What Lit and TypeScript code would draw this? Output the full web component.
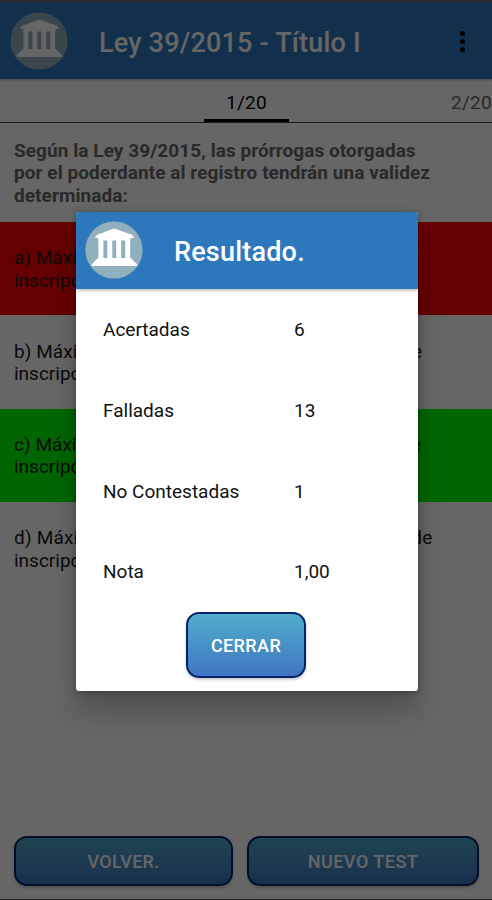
import { LitElement, html, css, svg } from "lit";
import { customElement, property } from "lit/decorators.js";
import { classMap } from "lit/directives/class-map.js";

@customElement("temple-logo")
class TempleLogo extends LitElement {
  static styles = css`
    :host { display: block; width: 58px; height: 58px; flex: none; }
    svg { display: block; }
  `;
  render() {
    return html`<svg width="58" height="58" viewBox="0 0 58 58">
      <circle cx="29" cy="29" r="28.6" fill="#91b0bd" />
      <path d="M29.3 7.6 L47 13.8 L49.3 17 H9.7 L12 13.8 Z" fill="#fff" />
      <path d="M13.3 16 H45.3 V19.4 H13.3 Z" fill="#fff" />
      ${[13.4, 22.3, 31.2, 40.2].map((x) => svg`<rect x=${x} y="17" width="5" height="21.5" fill="#fff" />`)}
      <path d="M13 37 H45.6 L52.4 43.4 V45 H6.6 V43.4 Z" fill="#fff" />
    </svg>`;
  }
}

@customElement("gradient-button")
class GradientButton extends LitElement {
  @property() label = "";
  static styles = css`
    :host { display: flex; }
    button {
      flex: 1; margin: 0; padding: 1px 0 0; box-sizing: border-box;
      border: 2px solid #00246a; border-radius: 13px;
      background: linear-gradient(#50adcb, #4075c3);
      color: #fff; font: 500 18px Roboto, sans-serif; letter-spacing: var(--track, 0.25px);
      box-shadow: 0 2px 3px rgba(0, 0, 0, 0.2);
    }
  `;
  render() {
    return html`<button>${this.label}</button>`;
  }
}

interface Answer { first: string; size: string; state: string; }

const answers: Answer[] = [
  { first: "a) Máximo de tres años desde la fecha de", size: "a", state: "wrong" },
  { first: "b) Máximo de dos años a contar desde fecha de", size: "b", state: "" },
  { first: "c) Máximo de dos años a contar desde fecha de", size: "c", state: "right" },
  { first: "d) Máximo de seis años a contar desde fecha de", size: "d", state: "" },
];

const results = [
  ["Acertadas", "6"],
  ["Falladas", "13"],
  ["No Contestadas", "1"],
  ["Nota", "1,00"],
];

@customElement("app-root")
class AppRoot extends LitElement {
  static styles = css`
    :host {
      display: block; position: relative; width: 492px; height: 900px;
      overflow: hidden; background: #fff; font-family: Roboto, sans-serif; color: #1b1b1b;
    }
    .page { display: flex; flex-direction: column; height: 900px; }
    .status { height: 2px; background: #6b6b6b; }
    .bar {
      display: flex; align-items: center; height: 77px; box-sizing: border-box;
      padding: 0 20px 0 10px; background: #2d77bd; color: #fff;
      box-shadow: 0 1px 2px rgba(0, 0, 0, 0.3);
    }
    .title { flex: 1; margin-left: 31px; padding-top: 5px; font-size: 27px; font-weight: 500; letter-spacing: 0.2px; white-space: nowrap; }
    .more { display: flex; flex-direction: column; gap: 3px; padding: 1px 7px 0 0; }
    .dot { width: 5px; height: 5px; border-radius: 50%; background: #000; }
    .tabs {
      display: grid; grid-template-columns: 204px 85px 1fr; height: 44px; box-sizing: border-box;
      border-bottom: 1px solid #404040; font-size: 19px; line-height: 48px; letter-spacing: 0.3px; flex: none;
    }
    .tab { text-align: center; color: #000; border-bottom: 3px solid #000; height: 40px; }
    .next { text-align: right; color: #666; white-space: nowrap; }
    .question {
      margin: 17px 0 14px 14px; height: 68px; font-size: 19px; line-height: 22.4px; letter-spacing: 0.06px;
      font-weight: 700; color: #666; white-space: nowrap; flex: none;
    }
    .answer {
      display: flex; flex-direction: column; justify-content: center; height: 93.4px; flex: none; box-sizing: border-box;
      padding: 2px 0 0 14px; font-size: 19px; line-height: 22.5px; white-space: nowrap;
    }
    .wrong { background: #f00; }
    .right { background: #0f0; }
    .b { letter-spacing: 0.05px; }
    .c { letter-spacing: 0.04px; }
    .d { letter-spacing: 0.21px; }
    .actions { display: flex; gap: 14px; margin: auto 13px 13px 14px; height: 50px; }
    .back { width: 219px; }
    .new { flex: 1; --track: 0.5px; }
    .edge { height: 1px; background: #555; }
    .overlay {
      position: absolute; inset: 0; background: rgba(0, 0, 0, 0.6);
    }
    .dialog {
      width: 342px; height: 479px; margin: 212px 0 0 76px; display: flex; flex-direction: column;
      background: #fff; border-radius: 3px; overflow: hidden;
      box-shadow: 0 20px 28px rgba(0, 0, 0, 0.22), 0 1px 6px rgba(0, 0, 0, 0.28);
    }
    .head {
      display: flex; align-items: center; height: 77px; flex: none; box-sizing: border-box;
      padding: 0 0 2px 9px; background: #2d77bd; color: #fff; box-shadow: 0 1px 4px rgba(0, 0, 0, 0.35);
    }
    .head .title { padding-top: 4px; margin-left: 31px; }
    .rows { display: grid; grid-template-rows: repeat(4, 80.7px); padding-left: 27px; color: #111; font-size: 19px; }
    .row { display: grid; grid-template-columns: 191px 1fr; align-items: center; padding-top: 1px; }
    .close { width: 120px; height: 66px; margin: 0 0 0 110px; --track: 0.4px; }
  `;
  render() {
    return html`
      <div class="page">
        <div class="status"></div>
        <div class="bar">
          <temple-logo></temple-logo>
          <div class="title">Ley 39/2015 - Título I</div>
          <div class="more"><i class="dot"></i><i class="dot"></i><i class="dot"></i></div>
        </div>
        <div class="tabs">
          <span></span><span class="tab">1/20</span><span class="next">2/20</span>
        </div>
        <div class="question">
          Según la Ley 39/2015, las prórrogas otorgadas<br />por el poderdante al registro tendrán una validez<br />determinada:
        </div>
        ${answers.map(
          (a) => html`<div class=${classMap({ answer: true, wrong: a.state === "wrong", right: a.state === "right" })}>
            <div class=${a.size}>${a.first}</div>
            <div>inscripción.</div>
          </div>`
        )}
        <div class="actions">
          <gradient-button class="back" label="VOLVER."></gradient-button>
          <gradient-button class="new" label="NUEVO TEST"></gradient-button>
        </div>
        <div class="edge"></div>
      </div>
      <div class="overlay">
        <div class="dialog">
          <div class="head">
            <temple-logo></temple-logo>
            <div class="title">Resultado.</div>
          </div>
          <div class="rows">
            ${results.map(([k, v]) => html`<div class="row"><span>${k}</span><span>${v}</span></div>`)}
          </div>
          <gradient-button class="close" label="CERRAR"></gradient-button>
        </div>
      </div>
    `;
  }
}
